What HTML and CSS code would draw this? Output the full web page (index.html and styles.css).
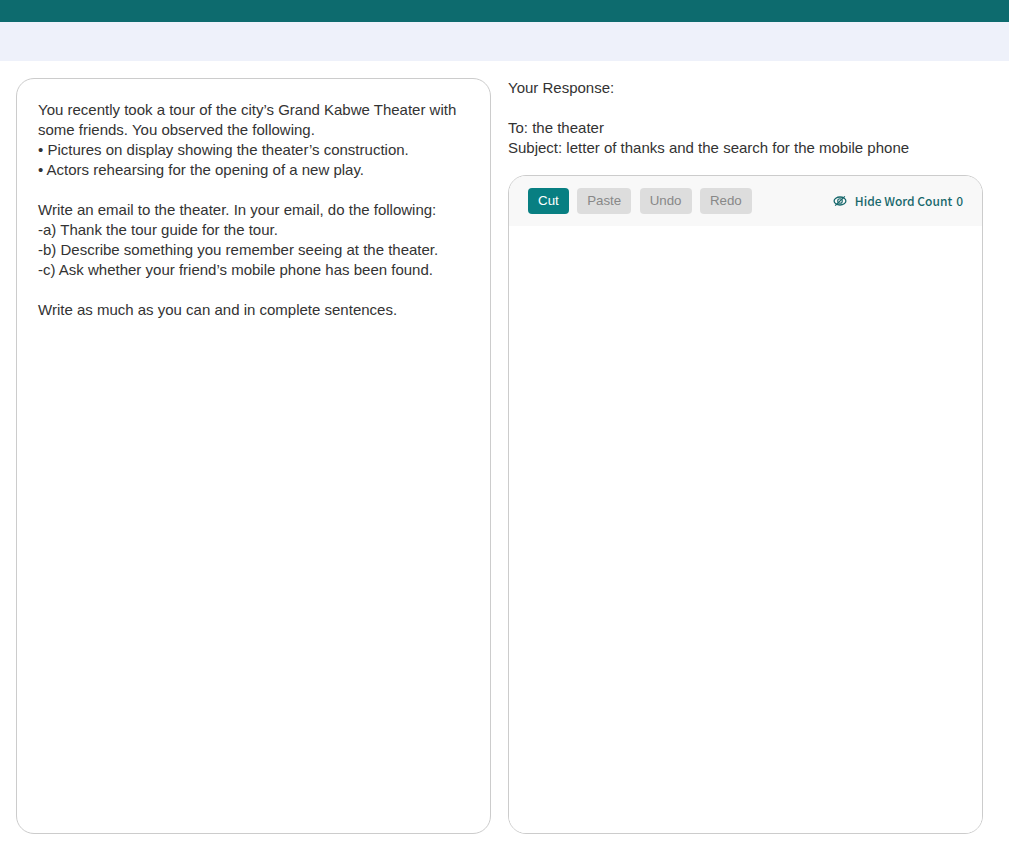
FILE: index.html
```html
<!DOCTYPE html>
<html lang="en">
<head>
    <meta charset="UTF-8">
    <meta name="viewport" content="width=device-width, initial-scale=1.0">
    <title>Writing Sample</title>
    <link rel="stylesheet" href="styles.css">
</head>
<body>
    <header class="top-bar"></header>
    <div class="sub-bar"></div>

    <main class="container">
        <section class="prompt">
            <p>You recently took a tour of the city’s Grand Kabwe Theater with some friends. You observed the following.<br>
            • Pictures on display showing the theater’s construction.<br>
            • Actors rehearsing for the opening of a new play.</p>

            <p>Write an email to the theater. In your email, do the following:<br>
            -a) Thank the tour guide for the tour.<br>
            -b) Describe something you remember seeing at the theater.<br>
            -c) Ask whether your friend’s mobile phone has been found.</p>

            <p>Write as much as you can and in complete sentences.</p>
        </section>

        <section class="response">
            <p>Your Response:</p>
            <p>To: the theater<br>
            Subject: letter of thanks and the search for the mobile phone</p>

            <div class="editor">
                <div class="toolbar">
                    <button class="btn active" id="cut">Cut</button>
                    <button class="btn" id="paste">Paste</button>
                    <button class="btn" id="undo">Undo</button>
                    <button class="btn" id="redo">Redo</button>
                    <div class="word-count">
                        <svg class="eye" viewBox="0 0 14 12" fill="none" stroke="currentColor">
                            <ellipse cx="7" cy="6" rx="5.9" ry="4" stroke-width="1.3"/>
                            <circle cx="7" cy="6" r="2.3" stroke-width="1.1"/>
                            <path d="M2.2 10.6L11.8 1.4" stroke-width="1.3"/>
                        </svg>
                        <span class="label">Hide Word Count</span>
                        <span id="count">0</span>
                    </div>
                </div>
                <textarea id="answer" spellcheck="false" aria-label="Your response"></textarea>
            </div>
        </section>
    </main>

    <script>
        const answer = document.getElementById("answer");
        const count = document.getElementById("count");

        // Update the word count while typing
        answer.addEventListener("input", () => {
            const words = answer.value.trim();
            count.textContent = words ? words.split(/\s+/).length : 0;
        });
    </script>
</body>
</html>
```

FILE: styles.css
```css
* {
    box-sizing: border-box;
}

body {
    margin: 0;
    height: 100vh;
    display: flex;
    flex-direction: column;
    overflow: hidden;
    background-color: #fff;
    color: #333;
    font-family: Arial, "Liberation Sans", sans-serif;
    font-size: 15px;
    line-height: 20px;
}

p {
    margin: 0 0 20px;
}

.top-bar {
    height: 22px;
    background-color: #0d6b6e;
}

.sub-bar {
    height: 39px;
    background-color: #eef1fa;
}

.container {
    flex: 1;
    display: grid;
    grid-template-columns: 475px 475px;
    gap: 17px;
    padding: 17px 26px 13px 16px;
}

.prompt {
    border: 1px solid #ccc;
    border-radius: 18px;
    padding: 21px;
}

.response {
    display: flex;
    flex-direction: column;
}

.response p:nth-child(2) {
    margin-bottom: 17px;
}

.editor {
    flex: 1;
    display: flex;
    flex-direction: column;
    border: 1px solid #ccc;
    border-radius: 18px;
    overflow: hidden;
}

.toolbar {
    display: flex;
    align-items: center;
    height: 50px;
    padding: 0 19px;
    background-color: #f8f8f8;
}

.btn {
    height: 26px;
    margin-right: 8.4px;
    padding: 0 10px;
    border: none;
    border-radius: 4px;
    background-color: #ddd;
    color: #888;
    font-family: Arial, "Liberation Sans", sans-serif;
    font-size: 13.333px;
    line-height: 26px;
}

.btn.active {
    background-color: #087f82;
    color: #fff;
}

.word-count {
    display: flex;
    align-items: center;
    margin-left: auto;
    color: #18686c;
    font-family: "Noto Sans CJK SC", sans-serif;
    font-size: 12px;
    font-weight: 500;
}

.eye {
    width: 14px;
    height: 12px;
    margin-right: 8px;
}

.label {
    margin-right: 4px;
}

textarea {
    flex: 1;
    padding: 15px 19px;
    border: none;
    outline: none;
    resize: none;
    font: inherit;
    color: inherit;
}
```
